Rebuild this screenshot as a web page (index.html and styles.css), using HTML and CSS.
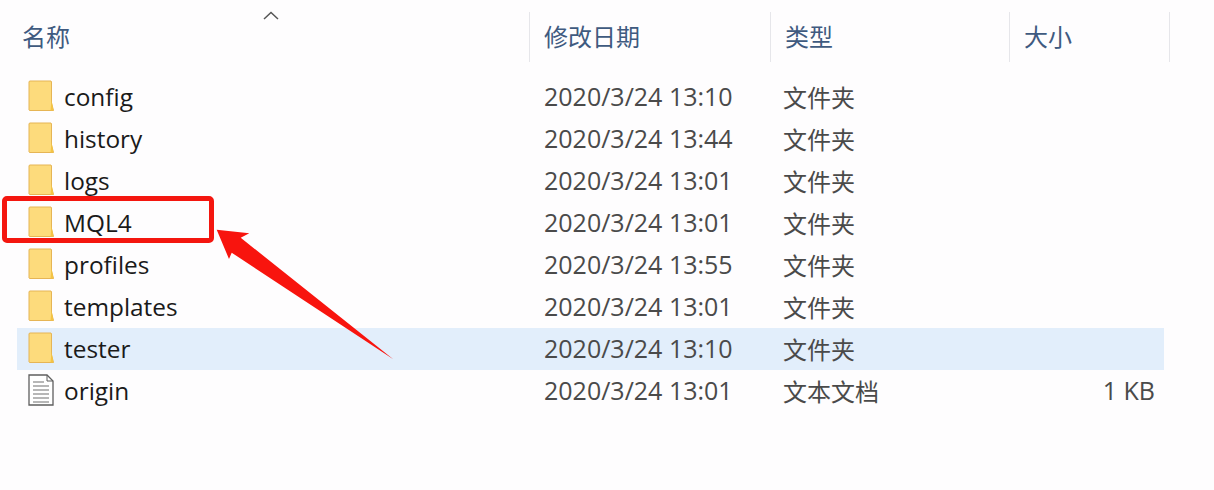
FILE: index.html
```html
<!DOCTYPE html>
<html lang="zh-CN">
<head>
    <meta charset="UTF-8">
    <title>MQL4</title>
    <link rel="stylesheet" href="styles.css">
</head>
<body>
    <svg width="0" height="0" class="defs">
        <symbol id="folder" viewBox="0 0 26 32">
            <path d="M1.500 1h21.500l.5 1v21l2 7.500H1.500L1 30V2z" fill="#fddb7c" stroke="#e6b555" stroke-width="1"/>
            <path d="M23.500 20l2 10.500h-3z" fill="#f4c445"/>
        </symbol>
        <symbol id="textfile" viewBox="0 0 26 32">
            <path d="M1 1h18l6 6v24H1z" fill="#fff" stroke="#5f5f5f" stroke-width="1.300"/>
            <path d="M19 1v6h6" fill="none" stroke="#5f5f5f" stroke-width="1"/>
            <path d="M5 8h11M5 12h16M5 16h16M5 20h16M5 24h16M5 28h16" stroke="#707070" stroke-width="1.200"/>
        </symbol>
    </svg>

    <div class="explorer">
        <div class="header">
            <div class="col col-name">名称<svg class="sort" width="16" height="9" viewBox="0 0 16 9"><path d="M1 8l7-6.500L15 8" fill="none" stroke="#555" stroke-width="1.500"/></svg></div>
            <div class="col col-date">修改日期</div>
            <div class="col col-type">类型</div>
            <div class="col col-size">大小</div>
        </div>

        <div class="rows">
            <div class="row">
                <div class="name"><svg class="icon"><use href="#folder"/></svg>config</div>
                <div class="date">2020/3/24 13:10</div>
                <div class="type">文件夹</div>
                <div class="size"></div>
            </div>
            <div class="row">
                <div class="name"><svg class="icon"><use href="#folder"/></svg>history</div>
                <div class="date">2020/3/24 13:44</div>
                <div class="type">文件夹</div>
                <div class="size"></div>
            </div>
            <div class="row">
                <div class="name"><svg class="icon"><use href="#folder"/></svg>logs</div>
                <div class="date">2020/3/24 13:01</div>
                <div class="type">文件夹</div>
                <div class="size"></div>
            </div>
            <div class="row">
                <div class="name"><svg class="icon"><use href="#folder"/></svg>MQL4</div>
                <div class="date">2020/3/24 13:01</div>
                <div class="type">文件夹</div>
                <div class="size"></div>
            </div>
            <div class="row">
                <div class="name"><svg class="icon"><use href="#folder"/></svg>profiles</div>
                <div class="date">2020/3/24 13:55</div>
                <div class="type">文件夹</div>
                <div class="size"></div>
            </div>
            <div class="row">
                <div class="name"><svg class="icon"><use href="#folder"/></svg>templates</div>
                <div class="date">2020/3/24 13:01</div>
                <div class="type">文件夹</div>
                <div class="size"></div>
            </div>
            <div class="row selected">
                <div class="name"><svg class="icon"><use href="#folder"/></svg>tester</div>
                <div class="date">2020/3/24 13:10</div>
                <div class="type">文件夹</div>
                <div class="size"></div>
            </div>
            <div class="row">
                <div class="name"><svg class="icon"><use href="#textfile"/></svg>origin</div>
                <div class="date">2020/3/24 13:01</div>
                <div class="type">文本文档</div>
                <div class="size">1 KB</div>
            </div>
        </div>
    </div>

    <!-- red annotation drawn over the list -->
    <div class="callout"></div>
    <svg class="arrow" width="200" height="150" viewBox="0 0 200 150">
        <path d="M1.700 4.700L34.300 8.300L25.700 12.700L178.300 134.300L16.700 27.700L14 34Z" fill="#f8140e"/>
    </svg>
</body>
</html>
```

FILE: styles.css
```css
* {
    margin: 0;
    padding: 0;
    box-sizing: border-box;
}

body {
    width: 1214px;
    height: 490px;
    overflow: hidden;
    position: relative;
    background-color: #fefdfe;
    font-family: 'Open Sans', 'Noto Sans CJK SC', sans-serif;
    color: #1c1c1c;
}

.defs {
    position: absolute;
}

.explorer {
    padding: 12px 0 0 17px;
}

.header {
    display: grid;
    grid-template-columns: 513px 241px 239px 160px;
    height: 50px;
    font-size: 24px;
    color: #3f5a80;
}

.col {
    position: relative;
    display: flex;
    align-items: center;
    padding-left: 14px;
    padding-bottom: 3px;
    border-right: 1px solid #e6e6ea;
}

.col-name {
    padding-left: 5px;
}

.sort {
    position: absolute;
    left: 246px;
    top: -1px;
}

.rows {
    margin-top: 14px;
}

.row {
    display: grid;
    grid-template-columns: 514px 240px 240px 153px;
    width: 1147px;
    height: 42px;
    align-items: center;
    font-size: 24px;
}

.selected {
    background-color: #e2eefb;
}

.name {
    display: flex;
    align-items: center;
    padding-left: 11px;
    padding-bottom: 2px;
    font-size: 24.400px;
    color: #1a1a1a;
}

.icon {
    width: 26px;
    height: 32px;
    margin-right: 10px;
}

.date,
.type,
.size {
    padding-bottom: 2px;
    color: #4a4a4a;
}

.date {
    padding-left: 13px;
    font-size: 25px;
}

.type {
    padding-left: 12px;
}

.size {
    text-align: right;
    padding-right: 9px;
    font-size: 25px;
}

.callout {
    position: absolute;
    left: 2px;
    top: 196px;
    width: 212px;
    height: 47px;
    border: 5px solid #f4160f;
    border-radius: 5px;
}

.arrow {
    position: absolute;
    left: 215px;
    top: 225px;
}
```
